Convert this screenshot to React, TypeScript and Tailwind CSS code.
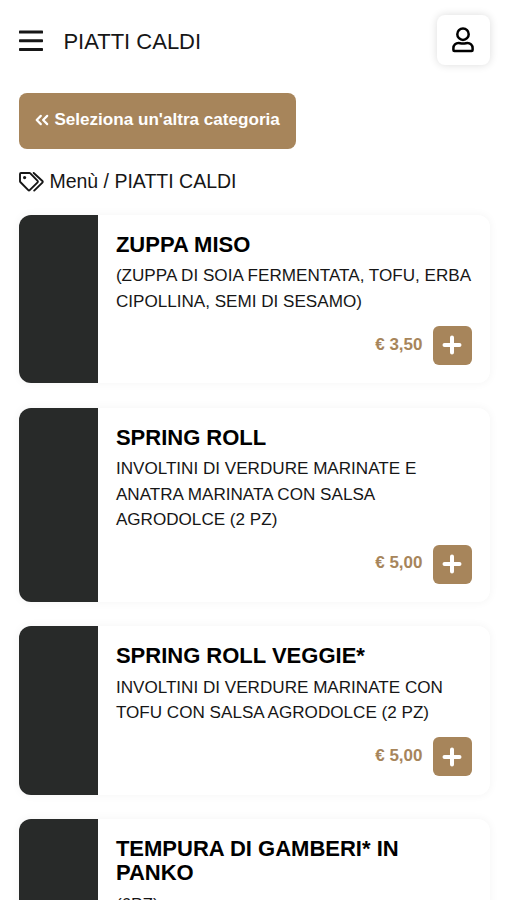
interface Dish {
  id: number;
  name: string;
  description: string;
  price: string;
}

const dishes: Dish[] = [
  {
    id: 1,
    name: "ZUPPA MISO",
    description: "(ZUPPA DI SOIA FERMENTATA, TOFU, ERBA CIPOLLINA, SEMI DI SESAMO)",
    price: "€ 3,50",
  },
  {
    id: 2,
    name: "SPRING ROLL",
    description: "INVOLTINI DI VERDURE MARINATE E ANATRA MARINATA CON SALSA AGRODOLCE (2 PZ)",
    price: "€ 5,00",
  },
  {
    id: 3,
    name: "SPRING ROLL VEGGIE*",
    description: "INVOLTINI DI VERDURE MARINATE CON TOFU CON SALSA AGRODOLCE (2 PZ)",
    price: "€ 5,00",
  },
  {
    id: 4,
    name: "TEMPURA DI GAMBERI* IN PANKO",
    description: "(6PZ)",
    price: "€ 9,00",
  },
];

function MenuIcon() {
  return (
    <svg width="24" height="22" viewBox="0 0 24 22" fill="currentColor">
      <rect x="0" y="0.6" width="24" height="3" rx="0.7" />
      <rect x="0" y="9.3" width="24" height="3" rx="0.7" />
      <rect x="0" y="18" width="24" height="3" rx="0.7" />
    </svg>
  );
}

function UserIcon() {
  return (
    <svg
      width="22"
      height="26"
      viewBox="0 0 22 26"
      fill="none"
      stroke="currentColor"
      strokeWidth="2.5"
      strokeLinejoin="round"
    >
      <circle cx="11" cy="7.2" r="5.7" />
      <path d="M6.600 15.900C3.700 15.900 1.400 18.200 1.400 21.100v2c0 .6.400 1 1 1h17.200c.6 0 1-.4 1-1v-2c0-2.900-2.300-5.200-5.200-5.200-1.200 0-2.200.7-4.400.7s-3.200-.7-4.400-.7z" />
    </svg>
  );
}

function DoubleChevronIcon() {
  return (
    <svg
      width="14"
      height="12"
      viewBox="0 0 14 12"
      fill="none"
      stroke="currentColor"
      strokeWidth="2.2"
      strokeLinecap="round"
      strokeLinejoin="round"
    >
      <path d="M5.800 1.900 1.700 6l4.100 4.100M12.200 1.900 8.100 6l4.100 4.100" />
    </svg>
  );
}

function TagsIcon() {
  return (
    <svg
      width="25"
      height="20"
      viewBox="0 0 25 20"
      fill="none"
      stroke="currentColor"
      strokeWidth="1.9"
      strokeLinecap="round"
      strokeLinejoin="round"
    >
      <path d="M1 2v7.200c0 .3.1.6.3.8l8 8.200c.4.4 1 .4 1.400 0l7.900-7.900c.4-.4.400-1 0-1.400L11.300 1.300c-.2-.2-.5-.3-.8-.3H2c-.6 0-1 .4-1 1z" />
      <path d="M14.700 1l8.700 8c.5.500.5 1.100 0 1.600l-8.200 8" />
      <circle cx="5.600" cy="5.600" r="1.600" fill="currentColor" stroke="none" />
    </svg>
  );
}

function PlusIcon() {
  return (
    <svg
      width="20"
      height="20"
      viewBox="0 0 20 20"
      fill="none"
      stroke="currentColor"
      strokeWidth="4"
      strokeLinecap="round"
    >
      <path d="M10 2.500v15M2.500 10h15" />
    </svg>
  );
}

function DishCard({ dish }: { dish: Dish }) {
  return (
    <div className="flex shrink-0 overflow-hidden rounded-[12px] bg-white shadow-[0_0_10px_rgba(0,0,0,0.05)]">
      <div className="w-[78.5px] shrink-0 bg-[#282a29]" />
      <div className="flex min-w-0 flex-1 flex-col pt-[18px] pr-[18px] pb-[18.4px] pl-[18px]">
        <h2 className="text-[22px] leading-[24px] font-bold text-black">{dish.name}</h2>
        <p className="mt-[6.4px] text-[17.1px] leading-[25.6px] text-[#161616]">{dish.description}</p>
        <div className="mt-[11.6px] flex items-center justify-end gap-[10.5px]">
          <span className="pb-[2px] text-[17px] font-bold text-[#a7855b]">{dish.price}</span>
          <button className="flex h-[39px] w-[38.5px] items-center justify-center rounded-[6px] bg-[#a7855b] text-white">
            <PlusIcon />
          </button>
        </div>
      </div>
    </div>
  );
}

export default function App() {
  return (
    <div className="h-[900px] overflow-hidden bg-white pr-[17.5px] pl-[19.4px] font-['Liberation_Sans',Arial,sans-serif] text-[#161616]">
      <header className="flex h-[93px] items-start justify-between pt-[15px]">
        <div className="flex h-[52px] items-center gap-5">
          <MenuIcon />
          <h1 className="text-[22px]">PIATTI CALDI</h1>
        </div>
        <button className="flex h-[50px] w-[53px] items-center justify-center rounded-[8px] bg-white text-black shadow-[0_0_8px_rgba(0,0,0,0.14)]">
          <UserIcon />
        </button>
      </header>

      <button className="flex h-[55.5px] w-[277px] items-center gap-[5px] rounded-[8px] bg-[#a7855b] pb-[1px] pl-[16px] text-[17.1px] font-bold whitespace-nowrap text-white">
        <DoubleChevronIcon />
        Seleziona un'altra categoria
      </button>

      <nav className="mt-[18.5px] flex h-[30px] items-center gap-[5px] text-[19.5px]">
        <TagsIcon />
        <span>Menù / PIATTI CALDI</span>
      </nav>

      <main className="mt-[17.8px] flex flex-col gap-[24.4px]">
        {dishes.map((dish) => (
          <DishCard key={dish.id} dish={dish} />
        ))}
      </main>
    </div>
  );
}
